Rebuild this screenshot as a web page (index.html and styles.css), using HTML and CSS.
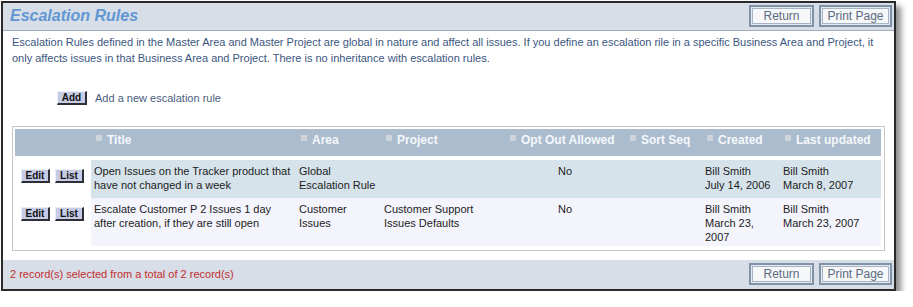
FILE: index.html
```html
<!DOCTYPE html>
<html lang="en">
<head>
  <meta charset="UTF-8" />
  <title>Escalation Rules</title>
  <link rel="stylesheet" href="styles.css">
</head>
<body>

<div class="window">
  <div class="titlebar">
    <h1 class="page-title">Escalation Rules</h1>
    <div class="page-actions">
      <button class="btn-frame btn-return" type="button">Return</button>
      <button class="btn-frame btn-print" type="button">Print Page</button>
    </div>
  </div>

  <div class="content">
    <p class="intro">Escalation Rules defined in the Master Area and Master Project are global in nature and affect all issues. If you define an escalation rile in a specific Business Area and Project, it only affects issues in that Business Area and Project. There is no inheritance with escalation rules.</p>

    <div class="add-row">
      <button class="btn-small btn-add" type="button">Add</button>
      <span class="add-label">Add a new escalation rule</span>
    </div>

    <div class="grid-box">
      <table class="rules">
        <thead>
          <tr>
            <th class="col-actions"></th>
            <th class="col-title"><span class="sort"></span>Title</th>
            <th class="col-area"><span class="sort"></span>Area</th>
            <th class="col-project"><span class="sort"></span>Project</th>
            <th class="col-optout"><span class="sort"></span>Opt Out Allowed</th>
            <th class="col-seq"><span class="sort"></span>Sort Seq</th>
            <th class="col-created"><span class="sort"></span>Created</th>
            <th class="col-updated"><span class="sort"></span>Last updated</th>
          </tr>
        </thead>
        <tbody>
          <tr class="row-odd">
            <td class="actions"><button class="btn-small" type="button">Edit</button><button class="btn-small" type="button">List</button></td>
            <td>Open Issues on the Tracker product that have not changed in a week</td>
            <td>Global Escalation Rule</td>
            <td></td>
            <td class="center">No</td>
            <td></td>
            <td>Bill Smith<br>July 14, 2006</td>
            <td>Bill Smith<br>March 8, 2007</td>
          </tr>
          <tr class="row-even">
            <td class="actions"><button class="btn-small" type="button">Edit</button><button class="btn-small" type="button">List</button></td>
            <td>Escalate Customer P 2 Issues 1 day after creation, if they are still open</td>
            <td>Customer Issues</td>
            <td>Customer Support Issues Defaults</td>
            <td class="center">No</td>
            <td></td>
            <td>Bill Smith<br>March 23, 2007</td>
            <td>Bill Smith<br>March 23, 2007</td>
          </tr>
        </tbody>
      </table>
    </div>
  </div>

  <div class="footer">
    <span class="record-count">2 record(s) selected from a total of 2 record(s)</span>
    <div class="page-actions">
      <button class="btn-frame btn-return" type="button">Return</button>
      <button class="btn-frame btn-print" type="button">Print Page</button>
    </div>
  </div>
</div>

</body>
</html>
```

FILE: styles.css
```css
body {
  margin: 0;
  padding: 0;
  background: #fff;
  font-family: "Liberation Sans", Arial, sans-serif;
}
.window {
  box-sizing: border-box;
  width: 895px;
  height: 290px;
  margin: 1px 0 0 1px;
  border: 2px solid #2a2a2a;
  background: #fff;
  box-shadow: 5px 5px 6px rgba(0,0,0,0.45);
  display: flex;
  flex-direction: column;
}
.titlebar {
  height: 27px;
  background: #d7dee8;
  border-bottom: 1px solid #a3adba;
  display: flex;
  align-items: center;
  justify-content: space-between;
  padding: 0 2px 0 7px;
}
.page-title {
  margin: 0;
  font-size: 16px;
  font-style: italic;
  font-weight: bold;
  color: #6196d3;
}
.page-actions {
  display: flex;
  gap: 5px;
}
.btn-frame {
  box-sizing: border-box;
  height: 22px;
  padding: 0;
  border: 2px solid #7f92a8;
  box-shadow: inset 0 0 0 1px #e4e9ef, inset 0 0 0 2px #a7b4c3;
  background: #f6f7f9;
  font-family: inherit;
  font-size: 12px;
  color: #5b6b80;
}
.btn-return {
  width: 65px;
}
.btn-print {
  width: 73px;
}
.content {
  flex: 1;
  padding: 0 9px;
}
.intro {
  margin: 3px 0 0;
  font-size: 11px;
  line-height: 16px;
  color: #3b5680;
}
.add-row {
  display: flex;
  align-items: center;
  gap: 8px;
  margin: 25px 0 0 45px;
  height: 14px;
}
.add-label {
  font-size: 11px;
  color: #4b5d7d;
}
.btn-small {
  box-sizing: border-box;
  width: 30px;
  height: 14px;
  padding: 0;
  border-style: solid;
  border-width: 1px 2px 2px 1px;
  border-color: #eceef6 #2e2e36 #2e2e36 #eceef6;
  background: #c6cbe6;
  font-family: inherit;
  font-size: 10px;
  font-weight: bold;
  line-height: 11px;
  color: #111;
}
.grid-box {
  margin-top: 21px;
  border: 1px solid #c6c6c6;
  padding: 2px 2px 4px;
}
.rules {
  width: 866px;
  border-collapse: collapse;
  table-layout: fixed;
  font-size: 11px;
  color: #1c1c1c;
}
.rules th {
  height: 29px;
  padding: 4px 3px 0 5px;
  vertical-align: top;
  text-align: left;
  background: #abbccf;
  border-bottom: 4px solid #fff;
  box-sizing: border-box;
  font-size: 12px;
  font-weight: bold;
  line-height: 15px;
  color: #f5f7fa;
  white-space: nowrap;
}
.sort {
  display: inline-block;
  width: 6px;
  height: 6px;
  margin-right: 5px;
  vertical-align: 3px;
  background: #cfd4db;
}
.col-actions { width: 76px; }
.col-title { width: 205px; }
.col-area { width: 85px; }
.col-project { width: 124px; }
.col-optout { width: 120px; }
.col-seq { width: 77px; }
.col-created { width: 78px; }
.col-updated { width: 101px; }
.rules td {
  padding: 4px 3px 2px;
  vertical-align: top;
  line-height: 14px;
}
.row-odd td {
  background: #d6e3eb;
  padding-bottom: 6px;
}
.row-even td {
  background: #f4f4fc;
}
.row-odd td.actions,
.row-even td.actions {
  background: #fff;
  padding: 8px 0 0 6px;
}
.actions .btn-small {
  width: 29px;
  margin-right: 5px;
}
.center {
  text-align: center;
}
.footer {
  height: 30px;
  margin-top: 9px;
  background: #d7dee8;
  display: flex;
  align-items: center;
  justify-content: space-between;
  padding: 0 2px 0 7px;
}
.record-count {
  font-size: 11px;
  color: #c22e2e;
}
```
